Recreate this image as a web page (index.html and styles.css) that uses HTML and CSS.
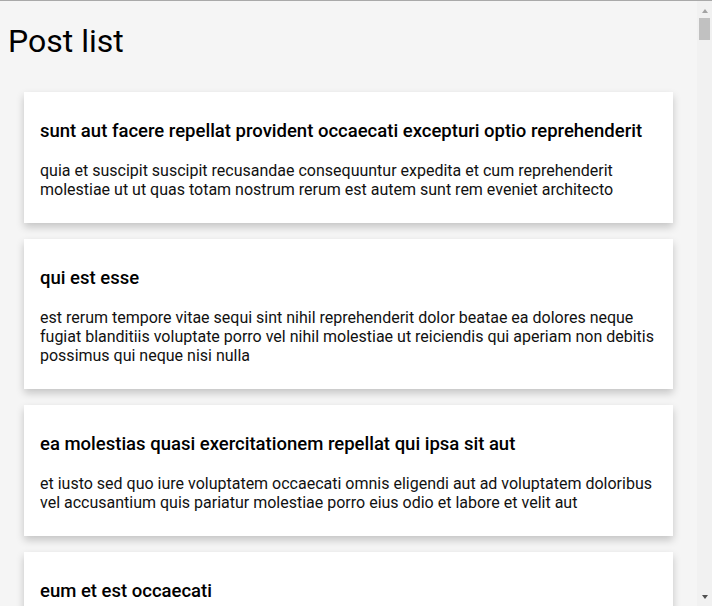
FILE: index.html
```html
<!DOCTYPE html>
<html lang="en">
<head>
<meta charset="utf-8">
<title>Post list</title>
<link rel="stylesheet" href="styles.css">
</head>
<body>
<h1 class="page-title">Post list</h1>
<div class="post-list">
  <div class="post-card">
    <h3 class="post-title">sunt aut facere repellat provident occaecati excepturi optio reprehenderit</h3>
    <p class="post-body">quia et suscipit
suscipit recusandae consequuntur expedita et cum
reprehenderit molestiae ut ut quas totam
nostrum rerum est autem sunt rem eveniet architecto</p>
  </div>
  <div class="post-card">
    <h3 class="post-title">qui est esse</h3>
    <p class="post-body">est rerum tempore vitae
sequi sint nihil reprehenderit dolor beatae ea dolores neque
fugiat blanditiis voluptate porro vel nihil molestiae ut reiciendis
qui aperiam non debitis possimus qui neque nisi nulla</p>
  </div>
  <div class="post-card">
    <h3 class="post-title">ea molestias quasi exercitationem repellat qui ipsa sit aut</h3>
    <p class="post-body">et iusto sed quo iure
voluptatem occaecati omnis eligendi aut ad
voluptatem doloribus vel accusantium quis pariatur
molestiae porro eius odio et labore et velit aut</p>
  </div>
  <div class="post-card">
    <h3 class="post-title">eum et est occaecati</h3>
    <p class="post-body">ullam et saepe reiciendis voluptatem adipisci
sit amet autem assumenda provident rerum culpa
quis hic commodi nesciunt rem tenetur doloremque ipsam iure
quis sunt voluptatem rerum illo velit</p>
  </div>
  <div class="post-card">
    <h3 class="post-title">nesciunt quas odio</h3>
    <p class="post-body">repudiandae veniam quaerat sunt sed
alias aut fugiat sit autem sed est
voluptatem omnis possimus esse voluptatibus quis
est aut tenetur dolor neque</p>
  </div>
  <div class="post-card">
    <h3 class="post-title">dolorem eum magni eos aperiam quia</h3>
    <p class="post-body">ut aspernatur corporis harum nihil quis provident sequi
mollitia nobis aliquid molestiae
perspiciatis et ea nemo ab reprehenderit accusantium quas
voluptate dolores velit et doloremque molestiae</p>
  </div>
  <div class="post-card">
    <h3 class="post-title">magnam facilis autem</h3>
    <p class="post-body">dolore placeat quibusdam ea quo vitae
magni quis enim qui quis quo nemo aut saepe
quidem repellat excepturi ut quia
sunt ut sequi eos ea sed quas</p>
  </div>
  <div class="post-card">
    <h3 class="post-title">dolorem dolore est ipsam</h3>
    <p class="post-body">dignissimos aperiam dolorem qui eum
facilis quibusdam animi sint suscipit qui sint possimus cum
quaerat magni maiores excepturi
ipsam ut commodi dolor voluptatum modi aut vitae</p>
  </div>
  <div class="post-card">
    <h3 class="post-title">nesciunt iure omnis dolorem tempora et accusantium</h3>
    <p class="post-body">consectetur animi nesciunt iure dolore
enim quia ad
veniam autem ut quam aut nobis
et est aut quod aut provident voluptas autem voluptas</p>
  </div>
  <div class="post-card">
    <h3 class="post-title">optio molestias id quia eum</h3>
    <p class="post-body">quo et expedita modi cum officia vel magni
doloribus qui repudiandae
vero nisi sit
quos veniam quod sed accusamus veritatis error</p>
  </div>
</div>
<div class="scrollbar" aria-hidden="true">
  <div class="sb-button"><span class="sb-arrow-up"></span></div>
  <div class="sb-track"><div class="sb-thumb"></div></div>
  <div class="sb-button"><span class="sb-arrow-down"></span></div>
</div>
</body>
</html>
```

FILE: styles.css
```css
html {
  border-top: 1px solid #a9a9a9;
  background: #f5f5f5;
  padding-right: 15px;
}

body {
  margin: 0 8px 8px;
  font-family: Roboto, "Liberation Sans", Arial, sans-serif;
  color: #000;
  background: #f5f5f5;
}

.page-title {
  font-size: 32px;
  font-weight: 400;
  margin: 21.44px 0 32px;
}

.post-list {
  display: flex;
  flex-direction: column;
  gap: 16px;
  padding: 0 16px 16px;
}

.post-card {
  background: #fff;
  box-shadow: 0 4px 8px 0 rgba(0, 0, 0, 0.2);
  padding: 28px 16px 24px;
}

.post-title {
  font-size: 18.5px;
  font-weight: 500;
  margin: 0 0 19px;
}

.post-body {
  font-size: 16px;
  margin: 0;
  color: #111;
}

/* classic scrollbar of the viewport */
.scrollbar {
  position: fixed;
  top: 1px;
  right: 0;
  bottom: 0;
  width: 15px;
  background: #f1f1f1;
  display: flex;
  flex-direction: column;
}

.sb-button {
  height: 17px;
  display: flex;
  align-items: center;
  justify-content: center;
}

.sb-arrow-up {
  width: 0;
  height: 0;
  border-left: 3.5px solid transparent;
  border-right: 3.5px solid transparent;
  border-bottom: 4px solid #a3a3a3;
  margin-top: 2px;
}

.sb-arrow-down {
  width: 0;
  height: 0;
  border-left: 3.5px solid transparent;
  border-right: 3.5px solid transparent;
  border-top: 4px solid #505050;
  margin-bottom: 2px;
}

.sb-track {
  flex: 1;
  padding: 0 2px;
}

.sb-thumb {
  height: 22px;
  background: #c1c1c1;
}
```
